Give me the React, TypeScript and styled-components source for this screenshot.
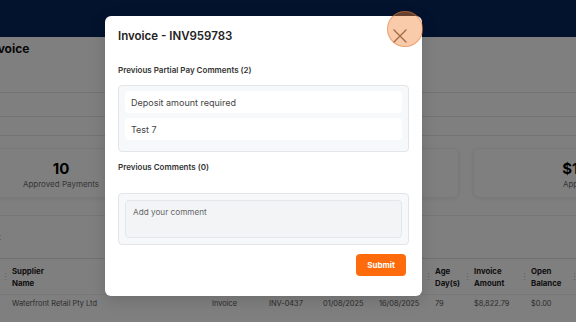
import React from "react";
import styled, { createGlobalStyle } from "styled-components";

const GlobalStyle = createGlobalStyle`
  body {
    margin: 0;
    font-family: "Inter", "Noto Sans", sans-serif;
    background: #ffffff;
  }
`;

const partialComments = ["Deposit amount required", "Test 7"];

const columns = [
  "",
  "Supplier Name",
  "",
  "",
  "",
  "",
  "Age Day(s)",
  "Invoice Amount",
  "Open Balance",
  "",
];

const row = [
  "",
  "Waterfront Retail Pty Ltd",
  "Invoice",
  "INV-0437",
  "01/08/2025",
  "16/08/2025",
  "79",
  "$8,822.79",
  "$0.00",
  "",
];

const App: React.FC = () => {
  return (
    <>
      <GlobalStyle />
      <Screen>
        <TopBar />
        <Content>
          <Heading>Invoice</Heading>
          <FilterRow $height={34} />
          <FilterRow $height={24} />
          <FilterRow $height={19} />
          <Cards>
            <Card>
              <CardValue>10</CardValue>
              <CardLabel>Approved Payments</CardLabel>
            </Card>
            <Card />
            <Card>
              <CardValue>$17,520.31</CardValue>
              <CardLabel>Approved Payments</CardLabel>
            </Card>
          </Cards>
          <Toolbar>Export</Toolbar>
          <Table>
            {columns.map((c, i) => (
              <HeadCell key={"h" + i}>
                <HeadLabel>{c}</HeadLabel>
                {i > 0 && <Sep>⋮</Sep>}
              </HeadCell>
            ))}
            {row.map((c, i) => (
              <Cell key={"c" + i}>{c}</Cell>
            ))}
          </Table>
        </Content>

        <Overlay>
          <Modal>
            <ModalHeader>
              <Title>Invoice - INV959783</Title>
              <CloseButton aria-label="Close">
                <svg width="14" height="14" viewBox="0 0 14 14">
                  <path
                    d="M1 1 L13 13 M13 1 L1 13"
                    stroke="#6b5a50"
                    strokeWidth="1.4"
                    strokeLinecap="round"
                  />
                </svg>
              </CloseButton>
            </ModalHeader>

            <SectionTitle $top={8} $bottom={9}>
              Previous Partial Pay Comments (2)
            </SectionTitle>
            <Box $padBottom={11}>
              {partialComments.map((c) => (
                <CommentItem key={c}>{c}</CommentItem>
              ))}
            </Box>

            <SectionTitle $top={9} $bottom={20}>
              Previous Comments (0)
            </SectionTitle>
            <Box $padBottom={6}>
              <CommentInput placeholder="Add your comment" />
            </Box>

            <Footer>
              <SubmitButton>Submit</SubmitButton>
            </Footer>
          </Modal>
        </Overlay>
        <ClickMark />
      </Screen>
    </>
  );
};

const Screen = styled.div`
  position: relative;
  width: 576px;
  height: 322px;
  overflow: hidden;
  background: #ffffff;
`;

const TopBar = styled.div`
  height: 37px;
  background: #07265d;
`;

const Content = styled.div`
  margin-left: -80px;
  width: 820px;
`;

const Heading = styled.h1`
  margin: 0;
  padding: 1px 0 0 67px;
  height: 21px;
  font-size: 12px;
  font-weight: 700;
  color: #111;
  line-height: 21px;
`;

const FilterRow = styled.div<{ $height: number }>`
  height: ${(p) => p.$height - 1}px;
  border-bottom: 1px solid #e6e6e6;
`;

const Cards = styled.div`
  display: grid;
  grid-template-columns: repeat(3, 256px);
  gap: 14px;
  padding: 12px 13px 0;
  height: 67px;
  border-bottom: 1px solid #ececec;
`;

const Card = styled.div`
  height: 50px;
  border-radius: 6px;
  border: 1px solid #f0f0f0;
  box-shadow: 0 1px 4px rgba(0, 0, 0, 0.08);
  display: flex;
  flex-direction: column;
  align-items: center;
  justify-content: center;
  box-sizing: border-box;
  padding-top: 4px;
`;

const CardValue = styled.div`
  font-size: 15px;
  font-weight: 700;
  color: #000;
  line-height: 18px;
`;

const CardLabel = styled.div`
  font-size: 8px;
  color: #6e6e6e;
  line-height: 12px;
`;

const Toolbar = styled.div`
  height: 42px;
  padding-left: 56px;
  font-size: 8px;
  color: #444;
  line-height: 42px;
  border-bottom: 1px solid #e2e2e2;
`;

const Table = styled.div`
  display: grid;
  grid-template-columns: 84px 200px 57px 54px 56px 56px 39px 57px 50px 1fr;
`;

const HeadCell = styled.div`
  position: relative;
  height: 36px;
  padding: 0 4px 0 8px;
  box-sizing: border-box;
  display: flex;
  align-items: center;
  border-bottom: 1px solid #f0f0f0;
`;

const HeadLabel = styled.span`
  max-width: 40px;
  font-size: 7.8px;
  font-weight: 700;
  color: #222;
  line-height: 12px;
`;

const Sep = styled.span`
  position: absolute;
  left: -3px;
  top: 12px;
  font-size: 9px;
  line-height: 12px;
  color: #bbb;
`;

const Cell = styled.div`
  height: 16px;
  padding-left: 8px;
  display: flex;
  align-items: center;
  font-size: 7.4px;
  color: #555;
  white-space: nowrap;
`;

const Overlay = styled.div`
  position: absolute;
  inset: 0;
  background: rgba(0, 0, 0, 0.5);
  padding: 16px 0 0 105px;
`;

const Modal = styled.div`
  width: 317px;
  height: 280px;
  background: #ffffff;
  border-radius: 6px;
  box-sizing: border-box;
  padding: 0 13px;
  display: flex;
  flex-direction: column;
  box-shadow: 0 4px 16px rgba(0, 0, 0, 0.15);
`;

const ModalHeader = styled.div`
  height: 40px;
  display: flex;
  align-items: center;
  justify-content: space-between;
`;

const Title = styled.h2`
  margin: 0;
  font-size: 11.5px;
  font-weight: 600;
  color: #222;
`;

const CloseButton = styled.button`
  width: 24px;
  height: 24px;
  margin: 0 -3px 0 0;
  border: none;
  background: transparent;
  padding: 0;
  display: flex;
  align-items: center;
  justify-content: center;
  cursor: pointer;
`;

const SectionTitle = styled.div<{ $top: number; $bottom: number }>`
  margin-top: ${(p) => p.$top}px;
  margin-bottom: ${(p) => p.$bottom}px;
  font-size: 8px;
  font-weight: 600;
  color: #333;
  line-height: 12px;
`;

const Box = styled.div<{ $padBottom: number }>`
  background: #f7f8fa;
  border: 1px solid #e3e5e8;
  border-radius: 4px;
  padding: 5px 6px ${(p) => p.$padBottom}px;
  display: flex;
  flex-direction: column;
  gap: 5px;
`;

const CommentItem = styled.div`
  height: 22px;
  background: #ffffff;
  border-radius: 4px;
  padding-left: 6px;
  display: flex;
  align-items: center;
  font-size: 9px;
  color: #444;
`;

const CommentInput = styled.textarea`
  height: 38px;
  margin-top: 1px;
  box-sizing: border-box;
  resize: none;
  background: #f3f4f6;
  border: 1px solid #e4e6e9;
  border-radius: 4px;
  padding: 6px 7px;
  font-family: inherit;
  font-size: 8.2px;
  color: #333;

  &::placeholder {
    color: #666;
  }
`;

const Footer = styled.div`
  display: flex;
  justify-content: flex-end;
  padding: 9px 3px 0 0;
`;

const SubmitButton = styled.button`
  width: 50px;
  height: 22px;
  border: none;
  border-radius: 4px;
  background: #fd6b0d;
  color: #ffffff;
  font-family: inherit;
  font-size: 8px;
  font-weight: 700;
  cursor: pointer;
`;

const ClickMark = styled.div`
  position: absolute;
  left: 387px;
  top: 11px;
  width: 36px;
  height: 36px;
  border-radius: 50%;
  background: rgba(244, 132, 56, 0.42);
  border: 1px solid rgba(220, 120, 50, 0.5);
  box-sizing: border-box;
  pointer-events: none;
`;

export default App;
